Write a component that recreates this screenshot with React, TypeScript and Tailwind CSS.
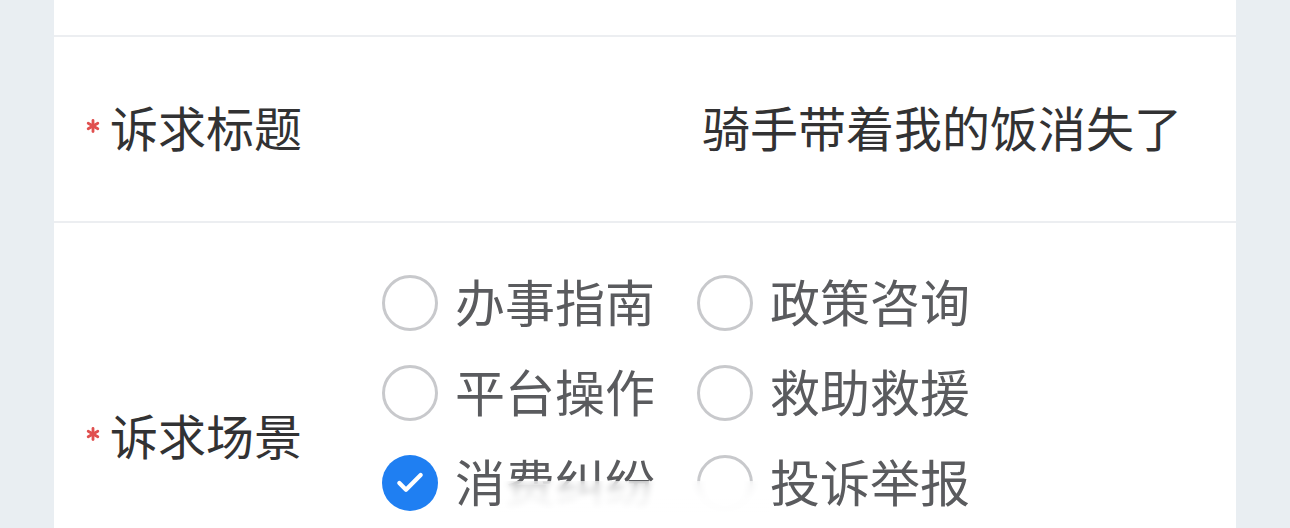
import { Check } from "lucide-react";

const options = [
  { label: "办事指南", checked: false },
  { label: "政策咨询", checked: false },
  { label: "平台操作", checked: false },
  { label: "救助救援", checked: false },
  { label: "消费纠纷", checked: true },
  { label: "投诉举报", checked: false },
];

function Label({ text }: { text: string }) {
  return (
    <div className="flex items-center">
      <span className="flex w-[24px] items-center">
        <svg viewBox="0 0 14 14" className="h-[14px] w-[14px] -translate-y-[3px]">
          <g stroke="#e0504f" strokeWidth="2.8" strokeLinecap="round">
            <line x1="7" y1="1.5" x2="7" y2="12.5" />
            <line x1="2.2" y1="4.2" x2="11.8" y2="9.8" />
            <line x1="2.2" y1="9.8" x2="11.8" y2="4.2" />
          </g>
        </svg>
      </span>
      <span className="-translate-y-[3px] text-[48px] leading-none text-[#323233]">{text}</span>
    </div>
  );
}

function Radio({ label, checked }: { label: string; checked: boolean }) {
  return (
    <div className="flex h-[90px] items-center gap-[17px]">
      {checked ? (
        <span className="flex h-[56px] w-[56px] items-center justify-center rounded-full bg-[#1f7ff2]">
          <Check className="h-[32px] w-[32px] text-white" strokeWidth={3.2} />
        </span>
      ) : (
        <span className="h-[56px] w-[56px] rounded-full border-[3px] border-[#c8c9cc]" />
      )}
      <span className="-translate-y-[3px] text-[50px] leading-none text-[#5a5b5e]">{label}</span>
    </div>
  );
}

export default function App() {
  return (
    <div
      className="h-[528px] overflow-hidden bg-[#e9eef2] px-[54px]"
      style={{ fontFamily: '"Noto Sans CJK SC", "Noto Sans", sans-serif' }}
    >
      <div className="bg-white">
        <div className="h-[37px] border-b-2 border-[#eceef1]" />

        <div className="flex h-[186px] items-center justify-between border-b-2 border-[#eceef1] pl-[32px] pr-[54px]">
          <Label text="诉求标题" />
          <span className="-translate-y-[3px] text-[48px] leading-none text-[#323233]">骑手带着我的饭消失了</span>
        </div>

        <div className="flex pl-[32px]">
          <div className="flex w-[296px] items-center">
            <Label text="诉求场景" />
          </div>
          <div className="relative grid grid-cols-[315px_315px] pt-[35px] pb-[123px]">
            {options.map((o) => (
              <Radio key={o.label} label={o.label} checked={o.checked} />
            ))}
            <div className="absolute left-[118px] top-[258px] h-[34px] w-[270px] bg-gradient-to-b from-white/60 via-white/90 to-white/95 backdrop-blur-[3px]" />
          </div>
        </div>
      </div>
    </div>
  );
}
